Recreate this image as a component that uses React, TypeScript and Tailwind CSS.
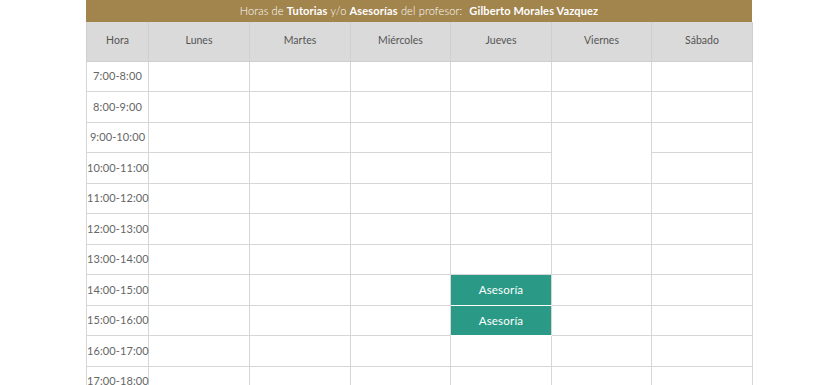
import React from "react";

const days = ["Lunes", "Martes", "Miércoles", "Jueves", "Viernes", "Sábado"];
const hours = [
  "7:00-8:00",
  "8:00-9:00",
  "9:00-10:00",
  "10:00-11:00",
  "11:00-12:00",
  "12:00-13:00",
  "13:00-14:00",
  "14:00-15:00",
  "15:00-16:00",
  "16:00-17:00",
  "17:00-18:00",
];

export default function App() {
  return (
    <div className="w-[840px] h-[385px] overflow-hidden bg-white" style={{ fontFamily: "Lato, 'Open Sans', sans-serif" }}>
      <div className="ml-[86px] w-[666px]">
        <div className="h-[22px] bg-[#a2844d] flex items-center justify-center text-[11px] text-white font-light tracking-[0.15px]">
          <span>Horas de <b className="font-bold">Tutorias</b> y/o <b className="font-bold">Asesorías</b> del profesor:</span>
          <b className="font-bold ml-[7px]">Gilberto Morales Vazquez</b>
        </div>
        <table className="w-[666px] table-fixed border-collapse">
          <colgroup>
            <col className="w-[62px]" />
            <col className="w-[101px]" />
            <col className="w-[101px]" />
            <col className="w-[100px]" />
            <col className="w-[101px]" />
            <col className="w-[100px]" />
            <col className="w-[101px]" />
          </colgroup>
          <thead>
            <tr className="h-[39px] bg-[#dadada]">
              <th className="border border-[#cfcfcf] border-t-0 text-[10.5px] font-normal text-[#555]">Hora</th>
              {days.map((d) => (
                <th key={d} className="border border-[#cfcfcf] border-t-0 text-[10.5px] font-normal text-[#555]">
                  {d}
                </th>
              ))}
            </tr>
          </thead>
          <tbody>
            {hours.map((h, i) => (
              <tr key={h} className="h-[30.5px]">
                <td className="border border-[#d6d6d6] text-center text-[11px] text-[#666] p-0 whitespace-nowrap tracking-[0.1px]">{h}</td>
                {days.map((d, j) => {
                  if (j === 4 && i === 3) return null;
                  if (j === 4 && i === 2)
                    return <td key={d} rowSpan={2} className="border border-[#d6d6d6]" />;
                  if (j === 3 && (i === 7 || i === 8))
                    return (
                      <td key={d} className="border border-[#d6d6d6] border-b-white bg-[#2a9a86] text-center text-[11.5px] text-white p-0 tracking-[0.2px]">
                        Asesoría
                      </td>
                    );
                  return <td key={d} className="border border-[#d6d6d6]" />;
                })}
              </tr>
            ))}
          </tbody>
        </table>
      </div>
    </div>
  );
}
